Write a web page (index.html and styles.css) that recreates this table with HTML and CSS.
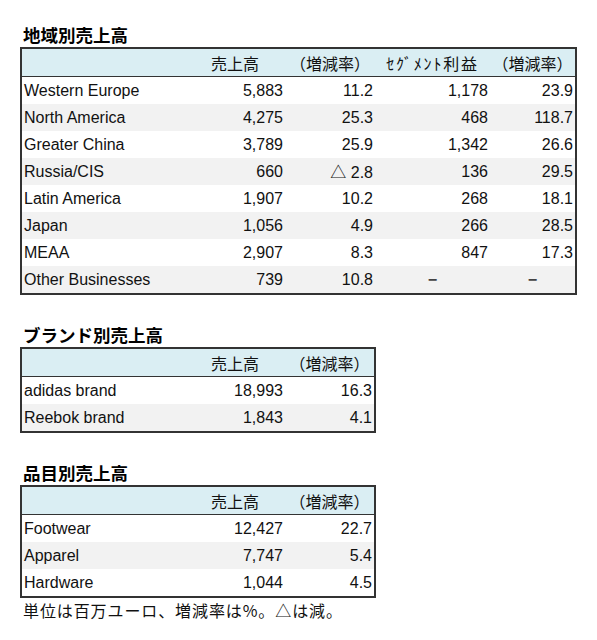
FILE: index.html
```html
<!DOCTYPE html>
<html lang="ja">
<head>
<meta charset="utf-8">
<link rel="stylesheet" href="styles.css">
</head>
<body>
<div class="page">
  <h2 class="title">地域別売上高</h2>
  <table class="tbl tbl-wide">
    <colgroup>
      <col class="c1"><col class="c2"><col class="c3"><col class="c4"><col class="c5">
    </colgroup>
    <thead>
      <tr><th></th><th>売上高</th><th>（増減率）</th><th class="seg">ｾｸﾞﾒﾝﾄ利益</th><th>（増減率）</th></tr>
    </thead>
    <tbody>
      <tr><td>Western Europe</td><td class="n">5,883</td><td class="n">11.2</td><td class="n">1,178</td><td class="n">23.9</td></tr>
      <tr><td>North America</td><td class="n">4,275</td><td class="n">25.3</td><td class="n">468</td><td class="n">118.7</td></tr>
      <tr><td>Greater China</td><td class="n">3,789</td><td class="n">25.9</td><td class="n">1,342</td><td class="n">26.6</td></tr>
      <tr><td>Russia/CIS</td><td class="n">660</td><td class="n"><span class="tri">△</span> 2.8</td><td class="n">136</td><td class="n">29.5</td></tr>
      <tr><td>Latin America</td><td class="n">1,907</td><td class="n">10.2</td><td class="n">268</td><td class="n">18.1</td></tr>
      <tr><td>Japan</td><td class="n">1,056</td><td class="n">4.9</td><td class="n">266</td><td class="n">28.5</td></tr>
      <tr><td>MEAA</td><td class="n">2,907</td><td class="n">8.3</td><td class="n">847</td><td class="n">17.3</td></tr>
      <tr><td>Other Businesses</td><td class="n">739</td><td class="n">10.8</td><td class="dash">−</td><td class="dash">−</td></tr>
    </tbody>
  </table>

  <h2 class="title">ブランド別売上高</h2>
  <table class="tbl">
    <colgroup>
      <col class="c1"><col class="c2"><col class="c3">
    </colgroup>
    <thead>
      <tr><th></th><th>売上高</th><th>（増減率）</th></tr>
    </thead>
    <tbody>
      <tr><td>adidas brand</td><td class="n">18,993</td><td class="n">16.3</td></tr>
      <tr><td>Reebok brand</td><td class="n">1,843</td><td class="n">4.1</td></tr>
    </tbody>
  </table>

  <h2 class="title">品目別売上高</h2>
  <table class="tbl">
    <colgroup>
      <col class="c1"><col class="c2"><col class="c3">
    </colgroup>
    <thead>
      <tr><th></th><th>売上高</th><th>（増減率）</th></tr>
    </thead>
    <tbody>
      <tr><td>Footwear</td><td class="n">12,427</td><td class="n">22.7</td></tr>
      <tr><td>Apparel</td><td class="n">7,747</td><td class="n">5.4</td></tr>
      <tr><td>Hardware</td><td class="n">1,044</td><td class="n">4.5</td></tr>
    </tbody>
  </table>
  <p class="note">単位は百万ユーロ、増減率は%。△は減。</p>
</div>
</body>
</html>
```

FILE: styles.css
```css
html, body {
  margin: 0;
  padding: 0;
  background: #ffffff;
}
body {
  font-family: "Liberation Sans", "Noto Sans CJK JP", sans-serif;
  color: #111111;
}
.page {
  padding: 23px 0 0 20px;
}
.title {
  margin: 0;
  font-size: 17.5px;
  font-weight: bold;
  line-height: 24px;
  height: 24px;
  padding-left: 3px;
  font-family: "Noto Sans CJK JP", sans-serif;
  color: #000;
}
.tbl {
  border-collapse: collapse;
  table-layout: fixed;
  border: 2px solid #333333;
  margin-bottom: 28px;
  font-size: 16px;
}
.c1 { width: 164px; }
.c2 { width: 100px; }
.c3 { width: 90px; }
.c4 { width: 115px; }
.c5 { width: 86px; }
.tbl th {
  background: #daeef3;
  height: 27px;
  padding: 0;
  font-weight: normal;
  text-align: center;
  font-family: "Noto Sans CJK JP", sans-serif;
  line-height: 20px;
  border-bottom: 1px solid #333333;
  color: #111;
}
.tbl th.seg { letter-spacing: 1.8px; }
.tbl td {
  height: 27px;
  padding: 0 2px;
  line-height: 20px;
  white-space: nowrap;
}
.tbl tbody tr:nth-child(even) td { background: #f2f2f2; }
.tbl td.n { text-align: right; }
.tbl td.dash {
  text-align: center;
  font-weight: bold;
  color: #444;
}
.tri { font-family: "Noto Sans CJK JP", sans-serif; }
.tbl:last-of-type { margin-bottom: 0; }
.note {
  margin: 2px 0 0 3px;
  font-size: 16px;
  letter-spacing: 0.9px;
  line-height: 20px;
  font-family: "Noto Sans CJK JP", sans-serif;
  color: #111;
}
```
